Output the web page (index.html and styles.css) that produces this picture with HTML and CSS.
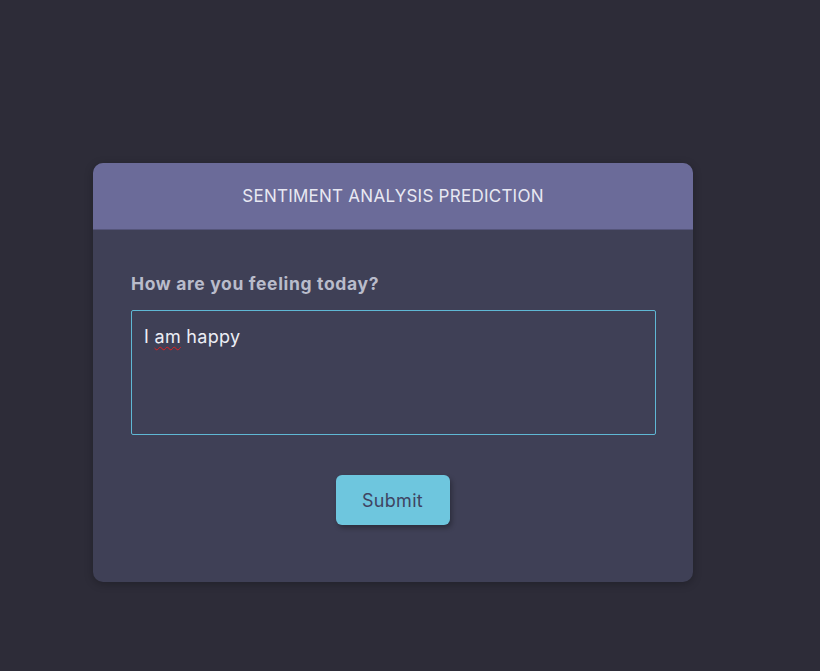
FILE: index.html
```html
<!DOCTYPE html>
<html>
<head>
<meta charset="utf-8">
<link rel="stylesheet" href="styles.css">
</head>
<body>
<div class="page">
  <div class="card">
    <div class="card-header">SENTIMENT ANALYSIS PREDICTION</div>
    <div class="card-body">
      <label class="label">How are you feeling today?</label>
      <div class="textarea"><span class="word">I</span> <span class="spell">am</span> happy</div>
      <div class="actions"><button class="btn">Submit</button></div>
    </div>
  </div>
</div>
</body>
</html>
```
FILE: styles.css
```css
html, body {
  margin: 0;
  padding: 0;
  background: #2d2c38;
  height: 100%;
}
.page {
  padding: 163px 0 0 93px;
  font-family: Inter, "Liberation Sans", sans-serif;
}
.card {
  width: 600px;
  height: 419px;
  background: #3f4056;
  border-radius: 10px;
  overflow: hidden;
  box-shadow: 0 2px 8px rgba(0,0,0,0.25);
}
.card-header {
  height: 66px;
  background: #6b6b99;
  border-bottom: 1px solid #55557a;
  display: flex;
  align-items: center;
  justify-content: center;
  color: #e8e8f2;
  font-size: 17px;
  letter-spacing: 0.25px;
}
.card-body {
  padding: 42px 37px 0 38px;
  display: flex;
  flex-direction: column;
}
.label {
  color: #b9bccb;
  font-weight: 700;
  font-size: 17.5px;
  line-height: 24px;
  letter-spacing: 0.65px;
}
.textarea {
  margin-top: 14px;
  border: 1px solid #5fb8d4;
  border-radius: 2px;
  padding: 14px 12px;
  box-sizing: border-box;
  height: 125px;
  color: #eceef5;
  font-size: 18px;
  line-height: 24px;
  letter-spacing: 0.3px;
}
.spell {
  text-decoration: underline wavy #e02020;
  text-decoration-thickness: 1px;
  text-underline-offset: 3px;
}
.actions {
  display: flex;
  justify-content: center;
  margin-top: 40px;
}
.btn {
  width: 114px;
  height: 50px;
  background: #6ec6de;
  border: none;
  border-radius: 6px;
  color: #3f4462;
  font-family: Inter, "Liberation Sans", sans-serif;
  font-size: 18px;
  letter-spacing: 0.3px;
  box-shadow: 2px 3px 5px rgba(0,0,0,0.3);
  margin-left: -2px;
}
```
